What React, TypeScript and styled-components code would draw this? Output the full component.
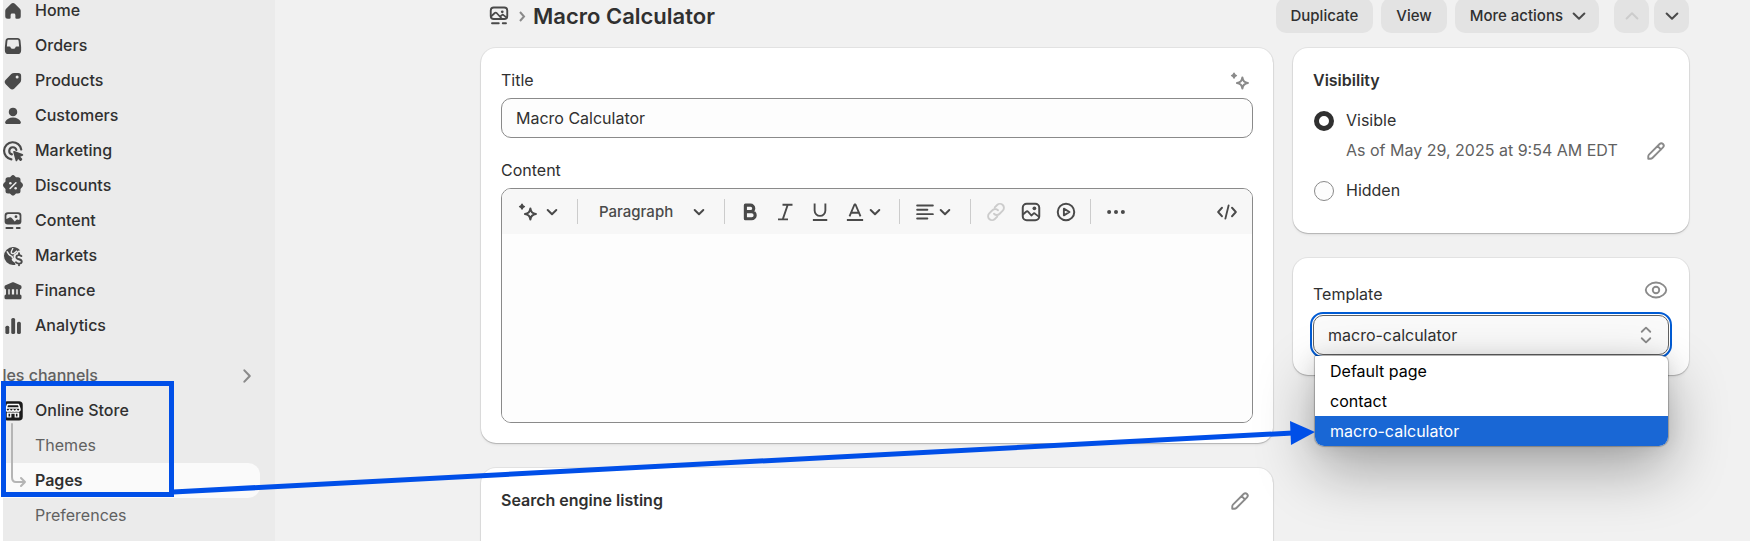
import React from "react";
import styled, { createGlobalStyle, css } from "styled-components";

const GlobalStyle = createGlobalStyle`
  * { box-sizing: border-box; }
  body { margin: 0; background: #f1f1f1; }
  button, input, select, textarea { font: inherit; color: inherit; margin: 0; }
`;

/* ---------- icons, drawn on a 20-unit grid ---------- */

const Glyph = styled.svg<{ $size?: number }>`
  display: block;
  flex: none;
  width: ${(p) => p.$size ?? 24}px;
  height: ${(p) => p.$size ?? 24}px;
  fill: currentColor;
  stroke: none;
`;

const Icon = ({ children }: { children: React.ReactNode }) => (
  <Glyph viewBox="0.4 0.4 19.2 19.2" aria-hidden="true">
    {children}
  </Glyph>
);

const line = {
  fill: "none",
  stroke: "currentColor",
  strokeWidth: 1.5,
  strokeLinecap: "round" as const,
  strokeLinejoin: "round" as const,
};

const HomeIcon = () => (
  <Icon>
    <path d="M8.300 4.400a2.400 2.400 0 0 1 3.400 0l3.800 3.700a2.400 2.400 0 0 1 .7 1.700v4.400a2 2 0 0 1-2 2h-1.400a.9.9 0 0 1-.9-.9v-2.200c0-.7-.5-1.200-1.200-1.200h-1.400c-.7 0-1.200.5-1.200 1.200v2.200a.9.9 0 0 1-.9.9H5.800a2 2 0 0 1-2-2V9.800c0-.64.25-1.250.7-1.700z" />
  </Icon>
);
const OrdersIcon = () => (
  <Icon>
    <path
      fillRule="evenodd"
      d="M6.400 3.500h7.200c1.400 0 2.200.8 2.400 2.200l.5 5.200v2.600a2.900 2.900 0 0 1-2.900 2.900H6.400a2.900 2.900 0 0 1-2.900-2.900v-2.600l.5-5.200c.2-1.400 1-2.200 2.400-2.200Zm.2 1.400c-.7 0-1 .3-1.100 1L5.100 10.400h2c.6 0 .9.300 1.100.9.200.6.800.9 1.400.9h.8c.6 0 1.200-.3 1.400-.9.2-.6.5-.9 1.100-.9h2l-.4-4.500c-.1-.7-.4-1-1.100-1Z"
    />
  </Icon>
);
const ProductsIcon = () => (
  <Icon>
    <path
      fillRule="evenodd"
      d="M10.900 3.500h3.300a2.300 2.300 0 0 1 2.300 2.300v3.300c0 .9-.3 1.700-.9 2.300l-4.500 4.500a2.500 2.500 0 0 1-3.500 0l-3.400-3.400a2.500 2.500 0 0 1 0-3.500l4.400-4.600c.6-.6 1.400-.9 2.300-.9ZM13.300 8a1.200 1.200 0 1 0 0-2.400 1.200 1.200 0 0 0 0 2.400Z"
    />
  </Icon>
);
const CustomersIcon = () => (
  <Icon>
    <circle cx="10" cy="6.700" r="3.400" />
    <path d="M10 11.100c2.900 0 5.200 1.300 6.200 3.400.4.900-.2 1.900-1.300 1.900H5.100c-1.100 0-1.700-1-1.300-1.900 1-2.100 3.300-3.400 6.200-3.400Z" />
  </Icon>
);
const MarketingIcon = () => (
  <Icon>
    <path {...line} strokeWidth={1.700} d="M16.600 8.800A6.900 6.900 0 1 0 8.700 16.700" />
    <path {...line} strokeWidth={1.700} d="M12.700 9.200A2.900 2.900 0 1 0 9.100 12.700" />
    <path d="M10.200 10.900c-.2-.6.3-1.100.9-.9l6.600 2.300c.7.300.7 1.200 0 1.500l-1.900.8 1.400 1.400c.3.300.3.800 0 1.100l-.6.600c-.3.300-.8.300-1.100 0l-1.400-1.400-.7 1.500c-.3.600-1.100.6-1.300 0Z" />
  </Icon>
);
const DiscountsIcon = () => (
  <Icon>
    <path d="M8.600 1.900a2 2 0 0 1 2.800 0l1 1h1.600a2 2 0 0 1 2 2v1.500l1.200 1.200a2.500 2.500 0 0 1 0 3.400l-1.200 1.300v1.600a2 2 0 0 1-2 2H12.400l-1 1.100a2 2 0 0 1-2.800 0l-1.100-1.100H6a2 2 0 0 1-2-2v-1.500l-1.200-1.400a2.500 2.500 0 0 1 0-3.400L4 6.400V4.900a2 2 0 0 1 2-2h1.600Z" />
    <path d="m7.700 12 4.600-4.600" stroke="#ebebeb" strokeWidth="1.300" strokeLinecap="round" />
    <circle cx="7.900" cy="7.800" r="1" fill="#ebebeb" />
    <circle cx="12.100" cy="11.700" r="1" fill="#ebebeb" />
  </Icon>
);
const ContentFilledIcon = () => (
  <Icon>
    <rect x="3.300" y="3" width="13.400" height="9.800" rx="2.600" />
    <path d="M4.700 8.300V6.100c0-1 .7-1.700 1.700-1.700h7.200c1 0 1.700.7 1.700 1.700v2.700l-1 .3c-.8-.4-1.500-.2-2.100.5l-.8.800L9 7.600c-.8-.8-1.800-.8-2.500 0Z" fill="#ebebeb" />
    <circle cx="12.400" cy="6.500" r="1.100" />
    <path {...line} d="M4.700 15.600h4.900M13 15.600h2.400" />
  </Icon>
);
const ContentIcon = () => (
  <Icon>
    <rect {...line} x="3.400" y="3.200" width="13.200" height="9.200" rx="2.400" />
    <path {...line} strokeWidth={1.400} d="m3.800 10.200 2.800-2.600c.5-.4 1-.4 1.500 0l4.200 4.600M10.800 10.600l1.500-1.300c.4-.4.900-.4 1.300 0l2.600 2" />
    <circle cx="12.600" cy="6.600" r="1.100" />
    <path {...line} d="M4.400 15.800h5.400M13 15.800h2.600" />
  </Icon>
);
const MarketsIcon = () => (
  <Icon>
    <path d="M10 2.800c2.400 0 4.500 1.100 5.800 2.900-1.200-.2-2.300.3-2.700 1.300-.5 1-2.200 1.300-2.600 2.300-.3.800.2 1.300-.2 2.100-.4.700-1.400.7-1.300 1.500.1.900 1.500 1.600 2.300 2.300.5.500.8 1.100.5 1.900-.6.100-1.200.1-1.800.1A7.200 7.200 0 0 1 10 2.800Z" />
    <path d="M5.200 6.200c.9 1.700 1.500 3.100 3.200 3.700 1.100.4 1.300 1.100.9 2" fill="none" stroke="#ebebeb" strokeWidth="1.200" />
    <path d="M9.900 3.600c-.2 1.300-1.200 2.100-1.300 3.400-.1 1 1.300 1.500 2.500.7l2.200-1.900" fill="none" stroke="#ebebeb" strokeWidth="1.100" />
    <path {...line} strokeWidth={1.500} d="M16.700 10.100c-.5-.6-1.200-.8-2-.8-1.200 0-2 .6-2 1.600 0 2.200 4.300 1.200 4.300 3.500 0 1-.9 1.700-2.200 1.700-1 0-1.900-.4-2.400-1.100M14.800 7.800v1.500M14.800 16.200v1.200" />
  </Icon>
);
const FinanceIcon = () => (
  <Icon>
    <path d="M9.100 3.200c.6-.3 1.200-.3 1.800 0l5.100 2.200c.5.200.8.700.8 1.200v.7c0 .7-.5 1.200-1.200 1.200H4.400c-.7 0-1.200-.5-1.200-1.200v-.7c0-.5.300-1 .8-1.200Z" />
    <path d="M4.400 8h1.800v5.500H4.400zM7.400 8h1.700v5.500H7.400zM10.900 8h1.700v5.500h-1.700zM13.800 8h1.800v5.500h-1.800z" />
    <rect x="3.200" y="12.700" width="13.600" height="3.900" rx="1.200" />
  </Icon>
);
const AnalyticsIcon = () => (
  <Icon>
    <rect x="3.900" y="9.700" width="3.100" height="6.700" rx="1.300" />
    <rect x="8.600" y="3.500" width="3.100" height="12.900" rx="1.300" />
    <rect x="13.200" y="6.500" width="3.100" height="9.900" rx="1.300" />
  </Icon>
);
const StoreIcon = () => (
  <Icon>
    <rect x="2.400" y="2.200" width="15.400" height="15.400" rx="3" fill="#1a1a1a" />
    <path
      fill="none"
      stroke="#fff"
      strokeWidth="1.200"
      strokeLinejoin="round"
      d="M5.600 4.700h8.800l1.200 3.800c0 1-.7 1.600-1.500 1.600s-1.400-.6-1.400-1.200c0 .6-.6 1.200-1.300 1.200S10 9.500 10 8.900c0 .6-.7 1.200-1.400 1.200S7.300 9.500 7.300 8.900c0 .6-.6 1.200-1.400 1.200S4.400 9.500 4.400 8.500ZM4.500 7.500h11"
    />
    <path fill="#fff" d="M5 11.100h1.400v4H5zM13.600 11.100H15v4h-1.400zM5 11.100h10v1.100H5zM7.700 12h1v3.100h-1zM11.300 12h1v3.100h-1zM5 14.300h3.700v.8H5zM11.300 14.300H15v.8h-3.700z" />
  </Icon>
);
const ChevronRightIcon = () => (
  <Icon>
    <path {...line} strokeWidth={1.700} d="m7.900 5.500 4.300 4.500-4.300 4.500" />
  </Icon>
);
const SparkIcon = () => (
  <Icon>
    <path {...line} strokeWidth={1.700} d="M11.900 7.200c.3 2.700 1.800 4.100 4.400 4.400-2.600.3-4.100 1.800-4.400 4.400-.3-2.600-1.700-4.100-4.300-4.400 2.600-.3 4-1.700 4.300-4.400Z" />
    <path stroke="currentColor" strokeWidth="1.200" strokeLinejoin="round" d="M5.200 3.800c.3 1 .9 1.600 1.900 1.900-1 .3-1.600.9-1.900 1.900-.3-1-.9-1.600-1.900-1.900 1-.3 1.600-.9 1.900-1.900Z" />
  </Icon>
);
const ImageIcon = () => (
  <Icon>
    <rect {...line} strokeWidth={1.600} x="3.400" y="3.400" width="13.200" height="13.200" rx="3.200" />
    <path {...line} d="m3.800 11.800 2.300-2c.6-.5 1.200-.4 1.700.1l2.500 2.900 1.400-1.300c.5-.5 1.200-.5 1.700 0l2.800 2.200" />
    <circle cx="12.700" cy="7" r="1.500" />
  </Icon>
);
const PlayIcon = () => (
  <Icon>
    <circle {...line} strokeWidth={1.600} cx="10" cy="10" r="6.600" />
    <path {...line} d="m8.300 7.300 4.500 2.700-4.500 2.700Z" />
  </Icon>
);
const LinkIcon = () => (
  <Icon>
    <path {...line} d="m9 6.300 1.900-1.900a3.100 3.100 0 0 1 4.500 4.500L12.900 11.400a3.100 3.100 0 0 1-4.500 0M11 13.700l-1.900 1.900a3.100 3.100 0 0 1-4.500-4.500l2.500-2.500a3.100 3.100 0 0 1 4.500 0" />
  </Icon>
);
const DotsIcon = () => (
  <Icon>
    <circle cx="4.500" cy="10" r="1.600" />
    <circle cx="10" cy="10" r="1.600" />
    <circle cx="15.500" cy="10" r="1.600" />
  </Icon>
);
const CodeIcon = () => (
  <Icon>
    <path {...line} d="M6 6.600 2.900 10 6 13.400M14 6.600l3.100 3.400-3.100 3.400M11.300 4.700l-2.600 10.600" />
  </Icon>
);
const AlignIcon = () => (
  <Icon>
    <path {...line} d="M3.700 4.800h12.600M3.700 8.200h8.200M3.700 11.700h12.600M3.700 15.200h8.200" />
  </Icon>
);
const BoldIcon = () => (
  <Icon>
    <path {...line} strokeWidth={2.500} d="M6.300 4.500h4.100a2.600 2.600 0 0 1 0 5.200H6.300ZM6.300 9.700h5a2.800 2.800 0 0 1 0 5.700h-5Z" />
  </Icon>
);
const ItalicIcon = () => (
  <Icon>
    <path {...line} strokeLinecap="butt" d="M8 4.200h8M4.400 15.900h8M12.200 4.200 8.200 15.900" />
  </Icon>
);
const UnderlineIcon = () => (
  <Icon>
    <path {...line} strokeLinecap="butt" d="M5.700 3.200v5.600a4.300 4.300 0 0 0 8.600 0V3.200M4.300 16.400h11.500" />
  </Icon>
);
const TextColorIcon = () => (
  <Icon>
    <path {...line} strokeLinecap="butt" d="m5.600 13.500 4-9.500h.8l4 9.500M7.100 10.600h5.800M3.500 16.400h13" />
  </Icon>
);
const PencilIcon = () => (
  <Icon>
    <path {...line} d="M3.800 16.200v-1.800c0-.6.200-1.100.6-1.500l8.500-8.500a1.900 1.900 0 0 1 2.700 2.700l-8.500 8.500c-.4.400-.9.600-1.500.6ZM11.300 6.100l2.700 2.700" />
  </Icon>
);
const EyeIcon = () => (
  <Icon>
    <path {...line} d="M18.200 10c0 2.400-3.500 6-8.200 6s-8.200-3.600-8.200-6S5.300 4 10 4s8.200 3.600 8.200 6Z" />
    <circle {...line} cx="10" cy="10" r="2.600" />
  </Icon>
);
const SelectIcon = () => (
  <Icon>
    <path {...line} d="M6.600 7.400 10 4.100l3.400 3.300M6.600 12.600l3.400 3.300 3.400-3.300" />
  </Icon>
);

const Chevron = ({ up, large }: { up?: boolean; large?: boolean }) => (
  <Glyph $size={large ? 20 : 16} viewBox="0 0 16 16" aria-hidden="true">
    <path {...line} strokeWidth={large ? 1.600 : 2} d={up ? "m3.700 10 4.300-4.200L12.300 10" : "m3.700 6 4.300 4.200L12.300 6"} />
  </Glyph>
);

/* ---------- layout ---------- */

const Page = styled.div`
  position: relative;
  display: flex;
  height: 100vh;
  overflow: hidden;
  padding-left: 3px;
  background: linear-gradient(to right, #fff 3px, #f1f1f1 3px);
  color: #303030;
  font-family: Inter, "Liberation Sans", sans-serif;
  font-size: 16px;
  font-weight: 400;
  line-height: 25px;
`;

const Sidebar = styled.nav`
  flex: 0 0 272px;
  overflow: hidden;
  background: #ebebeb;
`;

const NavList = styled.ul`
  list-style: none;
  margin: 0;
  padding: 0 15px 0 0;
`;

/* The top of the list is scrolled under the window edge. */
const MainNavList = styled(NavList)`
  margin-top: -7px;
`;

const NavLink = styled.a<{ $tone?: "sub" | "current" }>`
  display: flex;
  align-items: center;
  gap: 10px;
  height: 35px;
  margin-left: -2px;
  color: #303030;
  font-weight: 500;
  text-decoration: none;
  svg { color: #4a4a4a; }
  ${(p) =>
    p.$tone &&
    css`
      margin-left: 0;
      padding-left: 32px;
      font-weight: ${p.$tone === "current" ? 600 : 400};
      color: ${p.$tone === "current" ? "#303030" : "#616161"};
    `}
  ${(p) => p.$tone === "current" && css`
    background: #fafafa;
    border-radius: 0 12px 12px 0;
  `}
`;

const SectionButton = styled.button`
  display: flex;
  align-items: center;
  justify-content: space-between;
  width: 100%;
  height: 50px;
  padding: 15px 16px 0 0;
  border: 0;
  background: none;
  color: #616161;
  font-weight: 500;
  span { margin-left: -20px; }
  svg { color: #8a8a8a; }
`;

const SubNav = styled.div`
  position: relative;
`;

const TreeLine = styled.svg`
  position: absolute;
  left: 7px;
  top: -5px;
  width: 18px;
  height: 70px;
  fill: none;
  stroke: #b5b5b5;
  stroke-width: 2;
  stroke-linecap: round;
  stroke-linejoin: round;
`;

const Main = styled.main`
  flex: 1;
  min-width: 0;
  display: flex;
  flex-direction: column;
  padding: 0 61px 0 206px;
`;

const Header = styled.header`
  display: flex;
  align-items: center;
  justify-content: space-between;
  height: 48px;
  padding-bottom: 17px;
`;

const Breadcrumb = styled.div`
  display: flex;
  align-items: center;
  gap: 6px;
  padding-left: 6px;
  color: #4a4a4a;
`;

const Crumb = styled.a`
  color: inherit;
`;

const CrumbArrow = styled.svg`
  width: 10px;
  height: 16px;
  fill: none;
  stroke: #8a8a8a;
  stroke-width: 2;
`;

const PageTitle = styled.h1`
  margin: 0;
  color: #303030;
  font-size: 22px;
  line-height: 30px;
  font-weight: 600;
`;

const Actions = styled.div`
  display: flex;
  gap: 8px;
`;

const Pager = styled.div`
  display: flex;
  gap: 5px;
  margin-left: 7px;
`;

const ActionButton = styled.button<{ $kind?: "square" | "menu" }>`
  display: flex;
  align-items: center;
  justify-content: center;
  gap: 6px;
  height: 35px;
  width: ${(p) => (p.$kind === "square" ? "35px" : "auto")};
  padding: ${(p) => (p.$kind === "square" ? "0" : p.$kind === "menu" ? "0 10px 0 15px" : "0 15px")};
  border: 0;
  border-radius: 10px;
  background: #e3e3e3;
  color: #303030;
  font-size: 15px;
  font-weight: 550;
  svg { color: #4a4a4a; }
  &:disabled svg { color: #cccccc; }
`;

const Columns = styled.div`
  flex: 1;
  display: grid;
  grid-template-columns: minmax(0, 2fr) minmax(0, 1fr);
  gap: 20px;
`;

const Column = styled.div`
  display: flex;
  flex-direction: column;
  gap: 25px;
`;

const Card = styled.section<{ $roomy?: boolean }>`
  padding: 20px 20px ${(p) => (p.$roomy ? 30 : 20)}px;
  border-radius: 15px;
  background: #fff;
  box-shadow: 0 0 0 1px rgba(0, 0, 0, 0.06), 0 1px 1px rgba(0, 0, 0, 0.16), 0 2px 3px rgba(0, 0, 0, 0.06);
`;

const ListingCard = styled(Card)`
  flex: none;
  min-height: 140px;
`;

const Heading = styled.h2`
  margin: 0;
  font-size: 16px;
  line-height: 25px;
  font-weight: 600;
`;

const Row = styled.div`
  display: flex;
  align-items: center;
  justify-content: space-between;
`;

const Label = styled.label``;

const IconButton = styled.button`
  margin-right: 1px;
  padding: 0;
  border: 0;
  background: none;
  color: #8a8a8a;
`;

const FieldRow = styled(Row)`
  margin-bottom: 5px;
  height: 25px;
`;

const TextInput = styled.input`
  display: block;
  width: 100%;
  height: 40px;
  margin-bottom: 20px;
  padding: 0 14px;
  border: 1px solid #8a8a8a;
  border-radius: 10px;
  background: #fdfdfd;
`;

const Editor = styled.div`
  display: flex;
  flex-direction: column;
  height: 235px;
  border: 1px solid #8a8a8a;
  border-radius: 10px;
  overflow: hidden;
`;

const Toolbar = styled.div`
  display: flex;
  align-items: center;
  flex: 0 0 45px;
  padding: 0 8px;
  background: #f7f7f7;
  color: #4a4a4a;
`;

const Divider = styled.span`
  width: 1px;
  height: 25px;
  margin: 0 7px;
  background: #cccccc;
`;

const ToolButton = styled.button<{ $width?: number; $gap?: number }>`
  display: flex;
  align-items: center;
  gap: ${(p) => p.$gap ?? 0}px;
  width: ${(p) => p.$width ?? 35}px;
  height: 35px;
  padding: 0 0 0 6px;
  border: 0;
  background: none;
  &:disabled { color: #cccccc; }
`;

const FormatButton = styled(ToolButton)`
  justify-content: space-between;
  padding: 0 10px 0 14px;
  font-size: 15px;
  font-weight: 500;
`;

const Spacer = styled.span`
  flex: 1;
`;

const EditorArea = styled.textarea`
  flex: 1;
  border: 0;
  outline: 0;
  padding: 15px;
  resize: none;
  background: #fdfdfd;
`;

const Choices = styled.fieldset`
  margin: 15px 0 0;
  padding: 0;
  border: 0;
`;

const Choice = styled.label`
  display: flex;
  align-items: center;
  gap: 12px;
  padding-left: 1px;
`;

const Radio = styled.input`
  appearance: none;
  width: 20px;
  height: 20px;
  border: 1px solid #8a8a8a;
  border-radius: 50%;
  background: #fdfdfd;
  &:checked { border: 5px solid #303030; background: #fff; }
`;

const ChoiceNote = styled(Row)`
  margin: 5px 0 15px;
  padding-left: 33px;
  height: 25px;
  color: #616161;
`;

const TemplateRow = styled(Row)`
  align-items: flex-start;
  height: 37px;
  label { padding-top: 4px; }
`;

const SelectWrap = styled.div`
  position: relative;
`;

const Select = styled.select`
  appearance: none;
  display: block;
  width: 100%;
  height: 40px;
  padding: 0 45px 0 14px;
  border: 1px solid #616161;
  border-radius: 10px;
  outline: 2px solid #005bd3;
  outline-offset: 1px;
  background: #fafafa;
`;

const SelectArrow = styled.span`
  position: absolute;
  right: 11px;
  top: 8px;
  color: #8a8a8a;
  pointer-events: none;
`;

const Menu = styled.ul`
  position: absolute;
  z-index: 1;
  top: 41px;
  left: 2px;
  right: 1px;
  margin: 0;
  padding: 0;
  overflow: hidden;
  list-style: none;
  border-radius: 1px 6px 9px 9px;
  background: #fff;
  color: #000;
  box-shadow: 0 0 1px 1px rgba(0, 0, 0, 0.25), 0 0 20px rgba(0, 0, 0, 0.1), 0 24px 60px rgba(0, 0, 0, 0.32);
`;

const MenuItem = styled.li`
  height: 30px;
  padding-left: 15px;
  line-height: 30px;
  &[aria-selected="true"] { background: #1967d5; color: #fff; }
`;

const Highlight = styled.div`
  position: absolute;
  z-index: 2;
  left: 1px;
  top: 381px;
  width: 173px;
  height: 116px;
  border: 5px solid #004fe8;
  pointer-events: none;
`;

const Arrow = styled.svg`
  position: absolute;
  z-index: 2;
  left: 171px;
  top: 420px;
  width: 1145px;
  height: 80px;
  pointer-events: none;
`;

const navItems: [string, () => React.ReactElement][] = [
  ["Home", HomeIcon],
  ["Orders", OrdersIcon],
  ["Products", ProductsIcon],
  ["Customers", CustomersIcon],
  ["Marketing", MarketingIcon],
  ["Discounts", DiscountsIcon],
  ["Content", ContentFilledIcon],
  ["Markets", MarketsIcon],
  ["Finance", FinanceIcon],
  ["Analytics", AnalyticsIcon],
];

const templates = ["Default page", "contact", "macro-calculator"];

export default function App() {
  return (
    <Page>
      <GlobalStyle />
      <Sidebar>
        <MainNavList>
          {navItems.map(([name, ItemIcon]) => (
            <li key={name}>
              <NavLink href="#">
                <ItemIcon />
                {name}
              </NavLink>
            </li>
          ))}
        </MainNavList>
        <SectionButton type="button">
          <span>Sales channels</span>
          <ChevronRightIcon />
        </SectionButton>
        <NavList>
          <li>
            <NavLink href="#">
              <StoreIcon />
              Online Store
            </NavLink>
            <SubNav>
              <NavLink href="#" $tone="sub">Themes</NavLink>
              <NavLink href="#" $tone="current" aria-current="page">Pages</NavLink>
              <NavLink href="#" $tone="sub">Preferences</NavLink>
              <TreeLine viewBox="0 0 18 70" aria-hidden="true">
                <path d="M2 1v53c0 3 1 5 4 5h9M11 55l4 4-4 4" />
              </TreeLine>
            </SubNav>
          </li>
        </NavList>
      </Sidebar>

      <Main>
        <Header>
          <Breadcrumb>
            <Crumb href="#" aria-label="Pages">
              <ContentIcon />
            </Crumb>
            <CrumbArrow viewBox="0 0 10 16" aria-hidden="true">
              <path d="m3 4 4 4.500L3 13" />
            </CrumbArrow>
            <PageTitle>Macro Calculator</PageTitle>
          </Breadcrumb>
          <Actions>
            <ActionButton type="button">Duplicate</ActionButton>
            <ActionButton type="button">View</ActionButton>
            <ActionButton type="button" $kind="menu">
              More actions
              <Chevron large />
            </ActionButton>
            <Pager>
              <ActionButton type="button" $kind="square" disabled aria-label="Previous page">
                <Chevron up large />
              </ActionButton>
              <ActionButton type="button" $kind="square" aria-label="Next page">
                <Chevron large />
              </ActionButton>
            </Pager>
          </Actions>
        </Header>

        <Columns>
          <Column>
            <Card>
              <FieldRow>
                <Label htmlFor="title">Title</Label>
                <IconButton type="button" aria-label="Generate title">
                  <SparkIcon />
                </IconButton>
              </FieldRow>
              <TextInput id="title" defaultValue="Macro Calculator" />
              <FieldRow>
                <Label htmlFor="content">Content</Label>
              </FieldRow>
              <Editor>
                <Toolbar>
                  <ToolButton $width={60} $gap={4} aria-label="Generate text">
                    <SparkIcon />
                    <Chevron />
                  </ToolButton>
                  <Divider />
                  <FormatButton $width={132}>
                    Paragraph
                    <Chevron />
                  </FormatButton>
                  <Divider />
                  <ToolButton aria-label="Bold"><BoldIcon /></ToolButton>
                  <ToolButton aria-label="Italic"><ItalicIcon /></ToolButton>
                  <ToolButton aria-label="Underline"><UnderlineIcon /></ToolButton>
                  <ToolButton $width={55} aria-label="Text color">
                    <TextColorIcon />
                    <Chevron />
                  </ToolButton>
                  <Divider />
                  <ToolButton $width={56} aria-label="Alignment">
                    <AlignIcon />
                    <Chevron />
                  </ToolButton>
                  <Divider />
                  <ToolButton disabled aria-label="Insert link"><LinkIcon /></ToolButton>
                  <ToolButton aria-label="Insert image"><ImageIcon /></ToolButton>
                  <ToolButton aria-label="Insert video"><PlayIcon /></ToolButton>
                  <Divider />
                  <ToolButton aria-label="More"><DotsIcon /></ToolButton>
                  <Spacer />
                  <ToolButton aria-label="Show HTML"><CodeIcon /></ToolButton>
                </Toolbar>
                <EditorArea id="content" />
              </Editor>
            </Card>
            <ListingCard>
              <Row>
                <Heading>Search engine listing</Heading>
                <IconButton type="button" aria-label="Edit listing">
                  <PencilIcon />
                </IconButton>
              </Row>
            </ListingCard>
          </Column>

          <Column>
            <Card $roomy>
              <Heading>Visibility</Heading>
              <Choices aria-label="Visibility">
                <Choice>
                  <Radio type="radio" name="visibility" defaultChecked />
                  Visible
                </Choice>
                <ChoiceNote>
                  As of May 29, 2025 at 9:54 AM EDT
                  <IconButton type="button" aria-label="Edit date">
                    <PencilIcon />
                  </IconButton>
                </ChoiceNote>
                <Choice>
                  <Radio type="radio" name="visibility" />
                  Hidden
                </Choice>
              </Choices>
            </Card>
            <Card>
              <TemplateRow>
                <Label htmlFor="template">Template</Label>
                <IconButton type="button" aria-label="Preview template">
                  <EyeIcon />
                </IconButton>
              </TemplateRow>
              <SelectWrap>
                <Select id="template" defaultValue="macro-calculator">
                  {templates.map((name) => (
                    <option key={name}>{name}</option>
                  ))}
                </Select>
                <SelectArrow>
                  <SelectIcon />
                </SelectArrow>
                <Menu role="listbox" aria-label="Template">
                  {templates.map((name) => (
                    <MenuItem key={name} role="option" aria-selected={name === "macro-calculator"}>
                      {name}
                    </MenuItem>
                  ))}
                </Menu>
              </SelectWrap>
            </Card>
          </Column>
        </Columns>
      </Main>

      <Highlight />
      <Arrow viewBox="0 0 1145 80" aria-hidden="true">
        <path d="M2 72 1122 13" stroke="#004fe8" strokeWidth="5" />
        <path d="M1119 1l25 11-24 13z" fill="#004fe8" />
      </Arrow>
    </Page>
  );
}
